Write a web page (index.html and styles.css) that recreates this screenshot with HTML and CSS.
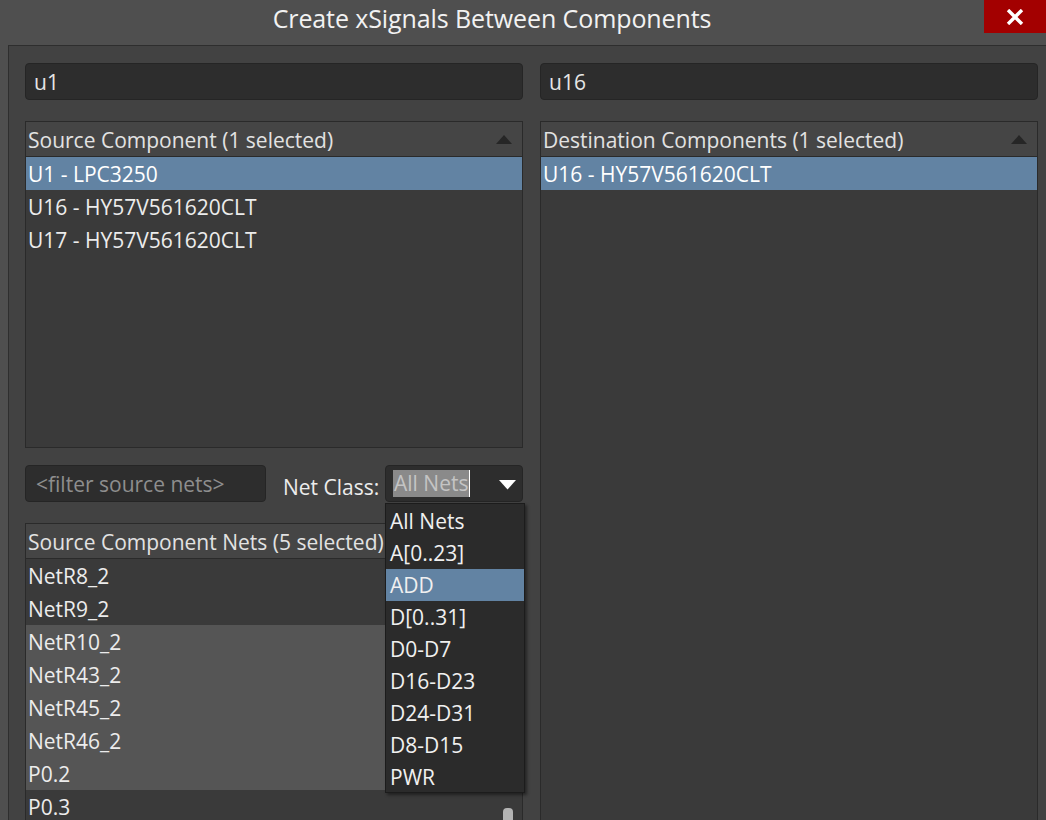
FILE: index.html
```html
<!DOCTYPE html>
<html>
<head>
<meta charset="utf-8">
<link rel="stylesheet" href="styles.css">
</head>
<body>
<div class="window">
  <div class="titlebar">
    <div class="title">Create xSignals Between Components</div>
    <div class="close"><svg width="18" height="16" viewBox="0 0 18 16"><path d="M2 1 L16 15 M16 1 L2 15" stroke="#fff" stroke-width="3.4" fill="none"/></svg></div>
  </div>
  <div class="panel">
    <div class="col">
      <div class="input">u1</div>
      <div class="list list-src">
        <div class="header"><span>Source Component (1 selected)</span><span class="sort"></span></div>
        <div class="row sel">U1 - LPC3250</div>
        <div class="row">U16 - HY57V561620CLT</div>
        <div class="row">U17 - HY57V561620CLT</div>
      </div>
      <div class="filter-row">
        <div class="input filter">&lt;filter source nets&gt;</div>
        <div class="label">Net Class:</div>
        <div class="combo">
          <span class="combo-text">All Nets</span><span class="caret"></span>
          <svg class="arrow" width="17" height="10" viewBox="0 0 17 10"><path d="M0 0 H17 L8.5 9.5 Z" fill="#fff"/></svg>
          <div class="dropdown">
            <div class="opt">All Nets</div>
            <div class="opt">A[0..23]</div>
            <div class="opt hl">ADD</div>
            <div class="opt">D[0..31]</div>
            <div class="opt">D0-D7</div>
            <div class="opt">D16-D23</div>
            <div class="opt">D24-D31</div>
            <div class="opt">D8-D15</div>
            <div class="opt">PWR</div>
          </div>
        </div>
      </div>
      <div class="list list-nets">
        <div class="header"><span>Source Component Nets (5 selected)</span></div>
        <div class="row">NetR8_2</div>
        <div class="row">NetR9_2</div>
        <div class="row gsel">NetR10_2</div>
        <div class="row gsel">NetR43_2</div>
        <div class="row gsel">NetR45_2</div>
        <div class="row gsel">NetR46_2</div>
        <div class="row gsel">P0.2</div>
        <div class="row">P0.3</div>
        <div class="thumb"></div>
      </div>
    </div>
    <div class="col">
      <div class="input">u16</div>
      <div class="list list-dst">
        <div class="header"><span>Destination Components (1 selected)</span><span class="sort"></span></div>
        <div class="row sel">U16 - HY57V561620CLT</div>
      </div>
    </div>
  </div>
</div>
</body>
</html>
```

FILE: styles.css
```css
* { box-sizing: border-box; }
html, body { margin: 0; padding: 0; }
body {
  width: 1046px;
  height: 820px;
  overflow: hidden;
  background: #4f4f4f;
  font-family: "Open Sans", "Noto Sans", sans-serif;
  color: #e6e6e6;
}
.window { width: 1046px; height: 820px; display: flex; flex-direction: column; }
.titlebar { height: 45px; display: flex; flex-shrink: 0; }
.title {
  flex: 1;
  text-align: center;
  font-size: 25px;
  line-height: 36px;
  color: #f2f2f2;
  letter-spacing: -0.1px;
}
.close {
  width: 62px;
  height: 33px;
  background: #a30000;
  display: flex;
  align-items: center;
  justify-content: center;
}
.panel {
  flex: 1;
  margin-left: 8px;
  background: #424242;
  border-left: 1px solid #2e2e2e;
  border-top: 1px solid #2e2e2e;
  padding: 17px 0 0 16px;
  display: flex;
  gap: 17px;
  overflow: hidden;
  min-height: 0;
}
.col { width: 498px; display: flex; flex-direction: column; flex-shrink: 0; }
.col > * { flex-shrink: 0; }
.input {
  height: 37px;
  background: #2d2d2d;
  border: 1px solid #252525;
  border-radius: 4px;
  font-size: 21px;
  line-height: 35px;
  padding-left: 8px;
  padding-top: 1px;
  color: #e6e6e6;
}
.list {
  margin-top: 21px;
  background: #3a3a3a;
  border: 1px solid #2a2a2a;
  position: relative;
}
.list-src { height: 327px; }
.list-dst { height: 720px; }
.list-nets { margin-top: 21px; height: 320px; }
.header {
  height: 35px;
  background: #454545;
  border-bottom: 1px solid #2a2a2a;
  display: flex;
  align-items: center;
  justify-content: space-between;
  padding: 1px 10px 0 2px;
  font-size: 21px;
  color: #e2e2e2;
}
.sort {
  width: 0; height: 0;
  border-left: 8px solid transparent;
  border-right: 8px solid transparent;
  border-bottom: 9px solid #262626;
}
.row {
  height: 33px;
  line-height: 33px;
  padding-left: 2px;
  padding-top: 1px;
  font-size: 21px;
  color: #ececec;
}
.row.sel { background: #6283a3; color: #fff; }
.row.gsel { background: #555555; }
.filter-row {
  margin-top: 17px;
  height: 37px;
  display: flex;
  align-items: center;
}
.filter { width: 241px; color: #8e8e8e; padding-left: 10px; }
.label {
  margin-left: 17px;
  font-size: 21px;
  color: #ececec;
  padding-top: 6px;
  width: 102px;
  white-space: nowrap;
}
.combo {
  position: relative;
  width: 138px;
  height: 37px;
  background: #2d2d2d;
  border: 1px solid #252525;
  border-radius: 4px;
  display: flex;
  align-items: center;
  padding-left: 7px;
}
.combo-text {
  background: #8a8a8a;
  color: #c4c4c4;
  font-size: 21px;
  line-height: 27px;
  padding: 0 1px;
}
.caret { width: 1px; height: 27px; background: #fff; }
.arrow { position: absolute; right: 6px; top: 14px; }
.dropdown {
  position: absolute;
  left: -1px;
  top: 37px;
  width: 140px;
  height: 290px;
  background: #2b2b2b;
  border: 1px solid #1c1c1c;
  box-shadow: 2px 2px 3px rgba(0,0,0,0.45);
  padding-top: 1px;
  z-index: 5;
}
.opt {
  height: 32px;
  line-height: 32px;
  font-size: 21px;
  padding-left: 4px;
  color: #f0f0f0;
}
.opt.hl { background: #6283a3; }
.thumb {
  position: absolute;
  right: 9px;
  top: 284px;
  width: 10px;
  height: 40px;
  border-radius: 4px;
  background: #b4b4b4;
}
```
